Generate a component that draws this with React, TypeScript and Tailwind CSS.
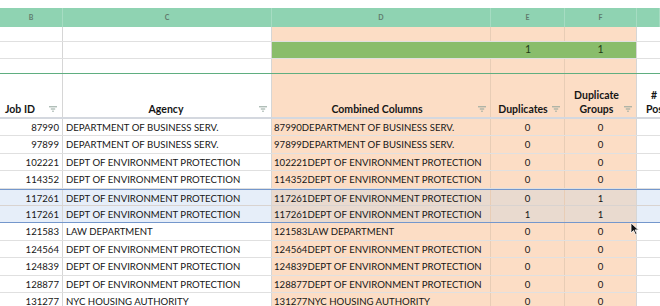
import React from 'react';

const W = ['w-[63px]', 'w-[209px]', 'w-[219px]', 'w-[74px]', 'w-[72px]', 'w-[23px]'];

const rows = [
  ['87990', 'DEPARTMENT OF BUSINESS SERV.', '0', '0'],
  ['97899', 'DEPARTMENT OF BUSINESS SERV.', '0', '0'],
  ['102221', 'DEPT OF ENVIRONMENT PROTECTION', '0', '0'],
  ['114352', 'DEPT OF ENVIRONMENT PROTECTION', '0', '0'],
  ['117261', 'DEPT OF ENVIRONMENT PROTECTION', '0', '1'],
  ['117261', 'DEPT OF ENVIRONMENT PROTECTION', '1', '1'],
  ['121583', 'LAW DEPARTMENT', '0', '0'],
  ['124564', 'DEPT OF ENVIRONMENT PROTECTION', '0', '0'],
  ['124839', 'DEPT OF ENVIRONMENT PROTECTION', '0', '0'],
  ['128877', 'DEPT OF ENVIRONMENT PROTECTION', '0', '0'],
  ['131277', 'NYC HOUSING AUTHORITY', '0', '0'],
];

const Filter = () => (
  <svg width="8" height="6" viewBox="0 0 8 6" className="shrink-0">
    <path d="M0 .8h8M1.8 3h4.4M3.2 5.2h1.6" stroke="#8fa39a" strokeWidth="1" />
  </svg>
);

const Cursor = () => (
  <svg width="9" height="13" viewBox="0 0 9 13" className="absolute left-[630px] top-[222px]">
    <path d="M1 1v10l2.5-2.5 2 4 1.5-.7-2-3.9H8.5z" fill="#111" stroke="#fff" strokeWidth="0.8" />
  </svg>
);

export default function App() {
  return (
    <div
      className="relative w-[660px] h-[306px] overflow-hidden bg-white text-[#161616]"
      style={{ fontFamily: 'Lato, "Open Sans", sans-serif' }}
    >
      <div className="h-[8px] bg-white" />

      {/* column letters */}
      <div className="flex h-[19px] bg-[#8fd3b2] text-[7px] font-bold text-[#5f7a6c]">
        {['B', 'C', 'D', 'E', 'F', ''].map((l, i) => (
          <div key={i} className={`${W[i]} flex items-center justify-center border-r border-[#a6dcc2]`}>
            {l}
          </div>
        ))}
      </div>

      {/* top rows */}
      <div className="flex h-[15px] border-b border-[#e0e0e0]">
        <div className={`${W[0]} border-r border-[#d6d6d6]`} />
        <div className={`${W[1]} border-r border-[#d6d6d6]`} />
        <div className={`${W[2]} bg-[#fcddc5] border-r border-[#e8cdb6]`} />
        <div className={`${W[3]} bg-[#fcddc5] border-r border-[#e8cdb6]`} />
        <div className={`${W[4]} bg-[#fcddc5] border-r border-[#d6d6d6]`} />
        <div className={W[5]} />
      </div>
      <div className="flex h-[17px] border-b border-[#e0e0e0] text-[10.5px]">
        <div className={`${W[0]} border-r border-[#d6d6d6]`} />
        <div className={`${W[1]} border-r border-[#d6d6d6]`} />
        <div className={`${W[2]} bg-[#89bd6b]`} />
        <div className={`${W[3]} bg-[#89bd6b] flex items-center justify-center text-[#1f3a14]`}>1</div>
        <div className={`${W[4]} bg-[#89bd6b] flex items-center justify-center text-[#1f3a14] border-r border-[#d6d6d6]`}>1</div>
        <div className={W[5]} />
      </div>
      <div className="flex h-[15px] border-b border-[#5fae80]">
        <div className={`${W[0]} border-r border-[#d6d6d6]`} />
        <div className={`${W[1]} border-r border-[#d6d6d6]`} />
        <div className={`${W[2]} bg-[#fcddc5] border-r border-[#e8cdb6]`} />
        <div className={`${W[3]} bg-[#fcddc5] border-r border-[#e8cdb6]`} />
        <div className={`${W[4]} bg-[#fcddc5] border-r border-[#d6d6d6]`} />
        <div className={W[5]} />
      </div>

      {/* header */}
      <div className="flex h-[45px] border-b-2 border-[#d4d8df] text-[10.5px] font-bold leading-[14px]">
        <div className={`${W[0]} flex items-end justify-between pl-[5px] pr-[5px] pb-[1px] border-r border-[#d6d6d6]`}>
          <span>Job ID</span>
          <span className="mb-[4px]"><Filter /></span>
        </div>
        <div className={`${W[1]} flex items-end pb-[1px] pr-[4px] border-r border-[#d6d6d6]`}>
          <span className="flex-1 text-center pl-[10px]">Agency</span>
          <span className="mb-[4px]"><Filter /></span>
        </div>
        <div className={`${W[2]} flex items-end pb-[1px] pr-[4px] bg-[#fcddc5] border-r border-[#e8cdb6]`}>
          <span className="flex-1 text-center pl-[4px]">Combined Columns</span>
          <span className="mb-[4px]"><Filter /></span>
        </div>
        <div className={`${W[3]} flex items-end pb-[1px] pr-[4px] pl-[3px] bg-[#fcddc5] border-r border-[#e8cdb6]`}>
          <span className="flex-1 text-center">Duplicates</span>
          <span className="mb-[4px]"><Filter /></span>
        </div>
        <div className={`${W[4]} flex items-end pb-[1px] pr-[4px] bg-[#fcddc5] border-r border-[#d6d6d6]`}>
          <span className="flex-1 text-center pl-[4px]">Duplicate<br />Groups</span>
          <span className="mb-[4px]"><Filter /></span>
        </div>
        <div className={`${W[5]} flex items-end pb-[1px] pl-[9px] whitespace-nowrap`}>
          <span>&nbsp;&nbsp;#<br />Pos</span>
        </div>
      </div>

      {/* data */}
      {rows.map((r, i) => {
        const sel = i === 4 || i === 5;
        const white = sel ? 'bg-[#e6eef9]' : 'bg-white';
        const orange = sel ? 'bg-[#e9dacf]' : 'bg-[#fcddc5]';
        const line = sel ? (i === 4 ? 'border-t border-t-[#7497cc] ' : '') + (i === 5 ? 'border-b-[#7497cc]' : 'border-b-[#d9d3d0]') : 'border-b-[#e0e0e0]';
        return (
          <div key={i} className={`flex h-[17.4px] border-b text-[9.6px] leading-[14px] ${line}`}>
            <div className={`${W[0]} ${white} pt-[2px] text-right pr-[3px] border-r border-[#d6d6d6]`}>{r[0]}</div>
            <div className={`${W[1]} ${white} pt-[2px] pl-[3px] border-r border-[#d6d6d6] whitespace-nowrap`}>{r[1]}</div>
            <div className={`${W[2]} ${orange} pt-[2px] pl-[2px] border-r border-[#e8cdb6] whitespace-nowrap overflow-hidden`}>
              {r[0] + r[1]}
            </div>
            <div className={`${W[3]} ${orange} pt-[2px] text-center border-r border-[#e8cdb6]`}>{r[2]}</div>
            <div className={`${W[4]} ${orange} pt-[2px] text-center border-r border-[#d6d6d6]`}>{r[3]}</div>
            <div className={`${W[5]} ${white}`} />
          </div>
        );
      })}

      <Cursor />
    </div>
  );
}
